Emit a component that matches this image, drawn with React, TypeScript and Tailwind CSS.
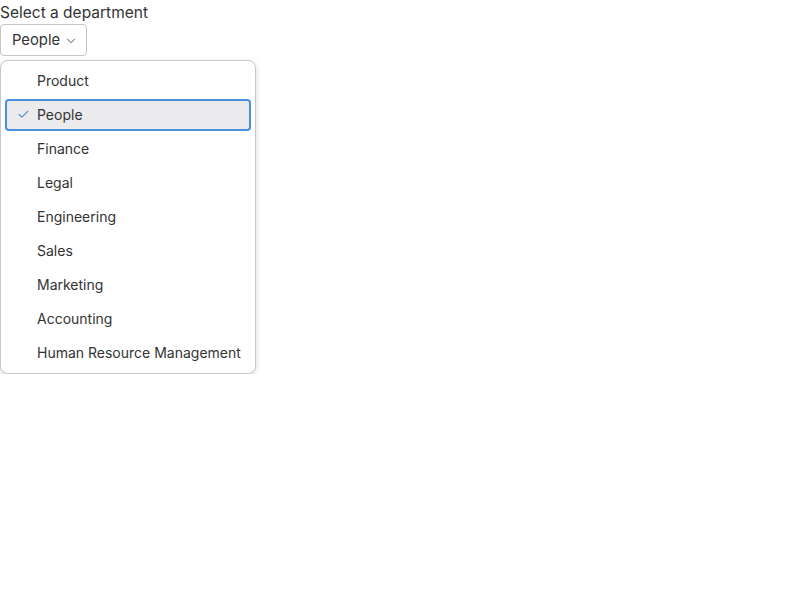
import { Check, ChevronDown } from "lucide-react";

const departments = [
  "Product",
  "People",
  "Finance",
  "Legal",
  "Engineering",
  "Sales",
  "Marketing",
  "Accounting",
  "Human Resource Management",
];

export default function App() {
  const selected = "People";
  return (
    <div className="font-['Inter',sans-serif] text-[#333]">
      <label className="block text-[15.5px] leading-[22px] pt-[2px] text-[#333]">Select a department</label>
      <button className="flex items-center gap-[4px] h-8 pl-[11px] pr-[8px] border border-[#c4c4c4] rounded-[4px] bg-white text-[14.8px] text-[#333]">
        People
        <ChevronDown size={14} strokeWidth={1.7} className="text-[#555] mt-px" />
      </button>
      <div className="mt-1 w-[256px] border border-[#c8c8c8] rounded-[8px] bg-white shadow-[0_2px_6px_rgba(0,0,0,0.15)] px-1 py-[3px]">
        {departments.map((d) => {
          const isSel = d === selected;
          return (
            <div key={d} className="h-[34px] flex items-center py-px">
              <div
                className={
                  isSel
                    ? "flex items-center w-full h-full border-2 border-[#4a90d9] rounded-[4px] bg-[#ebebed]"
                    : "flex items-center w-full h-full border-2 border-transparent"
                }
              >
                <span className="w-[30px] flex justify-center pl-[2px] pb-[2px]">
                  {isSel ? <Check size={13} strokeWidth={2} className="text-[#4a90d9]" /> : null}
                </span>
                <span className="text-[14px] whitespace-nowrap pb-[2px]">{d}</span>
              </div>
            </div>
          );
        })}
      </div>
    </div>
  );
}
